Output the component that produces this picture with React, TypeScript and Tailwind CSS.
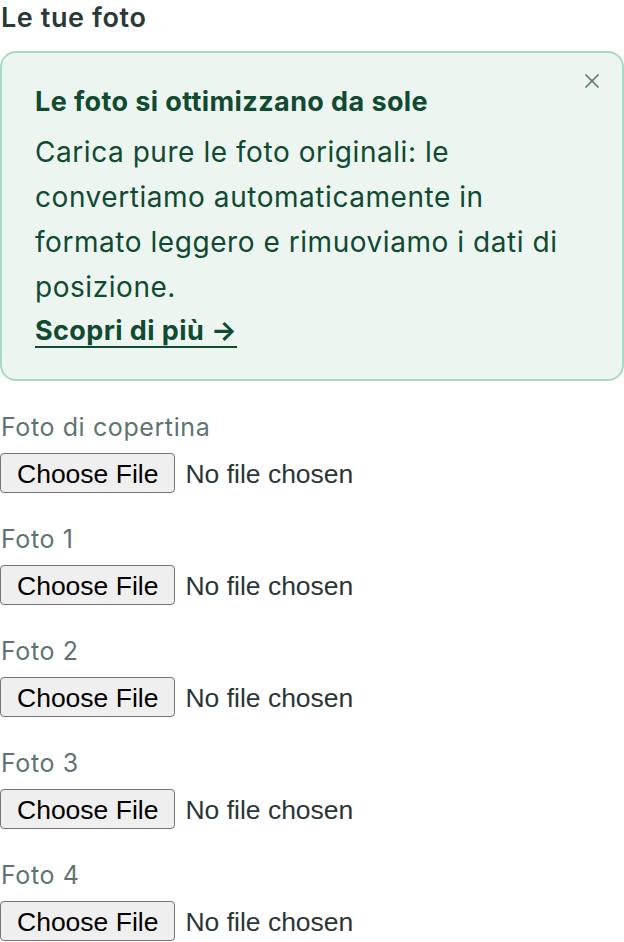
import { X } from "lucide-react";

const slots = ["Foto di copertina", "Foto 1", "Foto 2", "Foto 3", "Foto 4"];

function PhotoField({ label, id }: { label: string; id: string }) {
  return (
    <div className="flex flex-col gap-[10px]">
      <label
        htmlFor={id}
        className="text-[25px] leading-[32px] tracking-[0.6px] text-[#5f7373] pl-[1px]"
      >
        {label}
      </label>
      <input
        id={id}
        type="file"
        accept="image/*"
        className="block h-[40px] text-[26.5px] leading-[40px] tracking-normal text-[#2b3636] [font-family:'Liberation_Sans',Arial,sans-serif] file:h-[40px] file:mr-[10px] file:px-[16px] file:border file:border-solid file:border-[#767676] file:rounded-[4px] file:bg-[#efefef] file:text-black"
      />
    </div>
  );
}

export default function App() {
  return (
    <div className="w-[624px] bg-white [font-family:Inter,'Noto_Sans',sans-serif]">
      <h2 className="text-[27px] leading-[36px] font-semibold tracking-[0.6px] text-[#2b3838] pl-[1px]">
        Le tue foto
      </h2>

      {/* info notice */}
      <div className="relative mt-[15px] rounded-[16px] border-2 border-[#a9d8c5] bg-[#edf5f0] pl-[33px] pr-[30px] pt-[28px] pb-[27px] text-[#0f4a31]">
        <button
          type="button"
          aria-label="Chiudi"
          className="absolute right-[18px] top-[16px] text-[#5e7b6f]"
        >
          <X size={24} strokeWidth={1.75} />
        </button>
        <h3 className="text-[27px] leading-[42px] font-bold tracking-[0.4px]">
          Le foto si ottimizzano da sole
        </h3>
        <p className="mt-[7px] text-[28px] leading-[45px] tracking-[0.55px]">
          Carica pure le foto originali: le convertiamo automaticamente in formato leggero e
          rimuoviamo i dati di posizione.
        </p>
        <a
          href="#"
          className="inline-block text-[27px] leading-[42px] font-bold tracking-[0.4px] underline underline-offset-[6px] decoration-2"
        >
          Scopri di più →
        </a>
      </div>

      <div className="mt-[30px] flex flex-col gap-[30px]">
        {slots.map((s, i) => (
          <PhotoField key={s} label={s} id={`foto-${i}`} />
        ))}
      </div>
    </div>
  );
}
